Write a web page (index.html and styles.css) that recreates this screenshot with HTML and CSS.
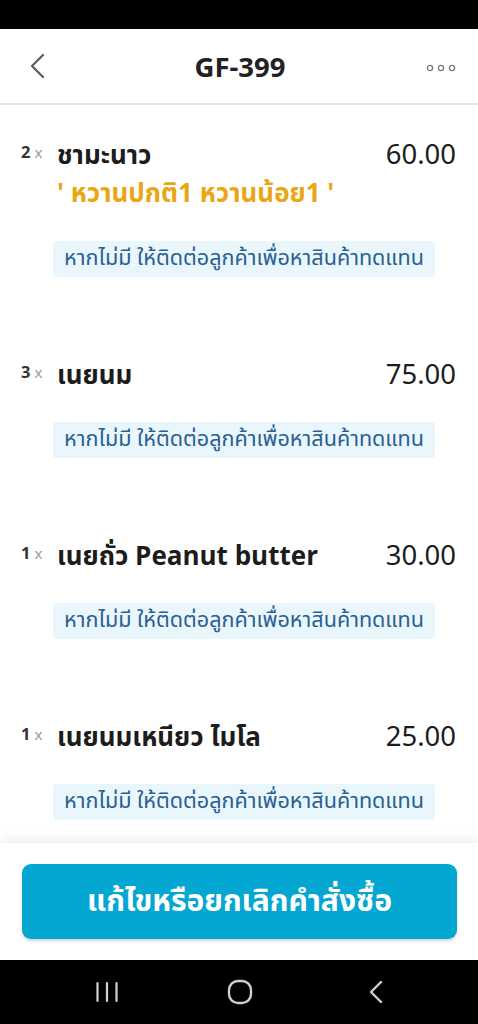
FILE: index.html
```html
<!DOCTYPE html>
<html lang="th">
<head>
<meta charset="utf-8">
<title>GF-399</title>
<link rel="stylesheet" href="styles.css">
</head>
<body>
<div class="screen">
  <div class="status"></div>
  <header class="header">
    <button class="icon-btn back" aria-label="back">
      <svg width="18" height="26" viewBox="0 0 18 26"><path d="M15 2 L4 13 L15 24" fill="none" stroke="#5a5a5a" stroke-width="2.2" stroke-linecap="round" stroke-linejoin="round"/></svg>
    </button>
    <h1 class="title">GF-399</h1>
    <button class="icon-btn more" aria-label="more">
      <svg width="30" height="8" viewBox="0 0 30 8"><circle cx="4" cy="4" r="2.6" fill="none" stroke="#7a7a7a" stroke-width="1.3"/><circle cx="15" cy="4" r="2.6" fill="none" stroke="#7a7a7a" stroke-width="1.3"/><circle cx="26" cy="4" r="2.6" fill="none" stroke="#7a7a7a" stroke-width="1.3"/></svg>
    </button>
  </header>

  <main class="list">
    <section class="item">
      <div class="qty"><b>2</b><span>x</span></div>
      <div class="body">
        <div class="row"><span class="name">ชามะนาว</span><span class="price">60.00</span></div>
        <div class="option">' หวานปกติ1 หวานน้อย1 '</div>
        <div class="note">หากไม่มี ให้ติดต่อลูกค้าเพื่อหาสินค้าทดแทน</div>
      </div>
    </section>
    <section class="item">
      <div class="qty"><b>3</b><span>x</span></div>
      <div class="body">
        <div class="row"><span class="name">เนยนม</span><span class="price">75.00</span></div>
        <div class="note">หากไม่มี ให้ติดต่อลูกค้าเพื่อหาสินค้าทดแทน</div>
      </div>
    </section>
    <section class="item">
      <div class="qty"><b>1</b><span>x</span></div>
      <div class="body">
        <div class="row"><span class="name">เนยถั่ว Peanut butter</span><span class="price">30.00</span></div>
        <div class="note">หากไม่มี ให้ติดต่อลูกค้าเพื่อหาสินค้าทดแทน</div>
      </div>
    </section>
    <section class="item">
      <div class="qty"><b>1</b><span>x</span></div>
      <div class="body">
        <div class="row"><span class="name">เนยนมเหนียว ไมโล</span><span class="price">25.00</span></div>
        <div class="note">หากไม่มี ให้ติดต่อลูกค้าเพื่อหาสินค้าทดแทน</div>
      </div>
    </section>
  </main>

  <footer class="footer">
    <button class="primary">แก้ไขหรือยกเลิกคำสั่งซื้อ</button>
  </footer>

  <nav class="navbar">
    <svg width="22" height="22" viewBox="0 0 22 22"><path d="M1.5 2v18M11 2v18M20.5 2v18" stroke="#d0d0d0" stroke-width="2.2" stroke-linecap="round"/></svg>
    <svg width="26" height="26" viewBox="0 0 26 26"><rect x="2" y="2" width="22" height="22" rx="9" fill="none" stroke="#d0d0d0" stroke-width="2.4"/></svg>
    <svg width="16" height="26" viewBox="0 0 16 26"><path d="M13 3 L3 13 L13 23" fill="none" stroke="#d0d0d0" stroke-width="2.4" stroke-linecap="round" stroke-linejoin="round"/></svg>
  </nav>
</div>
</body>
</html>
```
FILE: styles.css
```css
* { box-sizing: border-box; }
html, body { margin: 0; padding: 0; background: #000; }
body {
  font-family: "Noto Sans Thai", "Noto Sans", "DejaVu Sans", sans-serif;
  color: #1c1c1c;
}
.screen {
  width: 478px;
  height: 1024px;
  display: flex;
  flex-direction: column;
  background: #fff;
  overflow: hidden;
}
.status { height: 29px; background: #000; flex: none; }
.header {
  height: 76px;
  flex: none;
  display: flex;
  align-items: center;
  justify-content: space-between;
  padding: 0 22px 0 24px;
  border-bottom: 2px solid #e2e2e2;
  background: #fff;
}
.icon-btn {
  border: 0;
  background: none;
  padding: 0;
  width: 36px;
  display: flex;
  align-items: center;
}
.back { justify-content: flex-start; padding-left: 4px; }
.more { justify-content: flex-end; margin-top: 4px; }
.title {
  margin: 0;
  font-family: "Noto Sans", sans-serif;
  font-weight: 700;
  font-size: 27.5px;
  color: #222;
}
.list {
  flex: 1;
  overflow: hidden;
  padding: 32px 22px 0 21px;
  display: flex;
  flex-direction: column;
  gap: 80px;
}
.item {
  display: grid;
  grid-template-columns: 36px 1fr;
  flex: none;
}
.qty {
  padding-top: 5px;
  font-family: "Noto Sans", sans-serif;
  line-height: 20px;
  white-space: nowrap;
}
.qty b { font-size: 16.5px; font-weight: 700; color: #333; }
.qty span { font-size: 15px; color: #9a9a9a; margin-left: 4px; }
.row {
  display: flex;
  justify-content: space-between;
  align-items: baseline;
  height: 34px;
}
.name { display: block; font-size: 26px; font-weight: 700; color: #1c1c1c; line-height: 34px; }
.price { display: block; font-family: "Noto Sans", sans-serif; font-size: 27.5px; font-weight: 400; color: #1c1c1c; line-height: 34px; }
.option {
  margin-top: 9px;
  margin-bottom: 2px;
  line-height: 28px;
  font-size: 26px;
  font-weight: 700;
  color: #e9a713;
}
.note {
  display: inline-block;
  margin-top: 31px;
  margin-left: -4px;
  height: 36px;
  line-height: 36px;
  padding: 0 11px;
  background: #e9f6fc;
  border-radius: 3px;
  font-size: 21.6px;
  color: #2a5f92;
  white-space: nowrap;
}
.body { display: flex; flex-direction: column; align-items: flex-start; }
.body .row { align-self: stretch; }
.footer {
  flex: none;
  height: 117px;
  padding: 21px 21px 0 22px;
  background: #fff;
  box-shadow: 0 -4px 10px rgba(0, 0, 0, 0.07);
  position: relative;
}
.primary {
  width: 100%;
  height: 75px;
  border: 0;
  border-radius: 9px;
  background: #04a6d2;
  color: #fff;
  font-family: inherit;
  font-size: 30px;
  font-weight: 700;
  box-shadow: 0 2px 3px rgba(0, 0, 0, 0.18);
}
.navbar {
  flex: none;
  height: 64px;
  background: #000;
  display: flex;
  align-items: center;
  gap: 109px;
  padding: 0 0 0 96px;
}
.navbar svg:last-child { margin-left: 6px; }
```
